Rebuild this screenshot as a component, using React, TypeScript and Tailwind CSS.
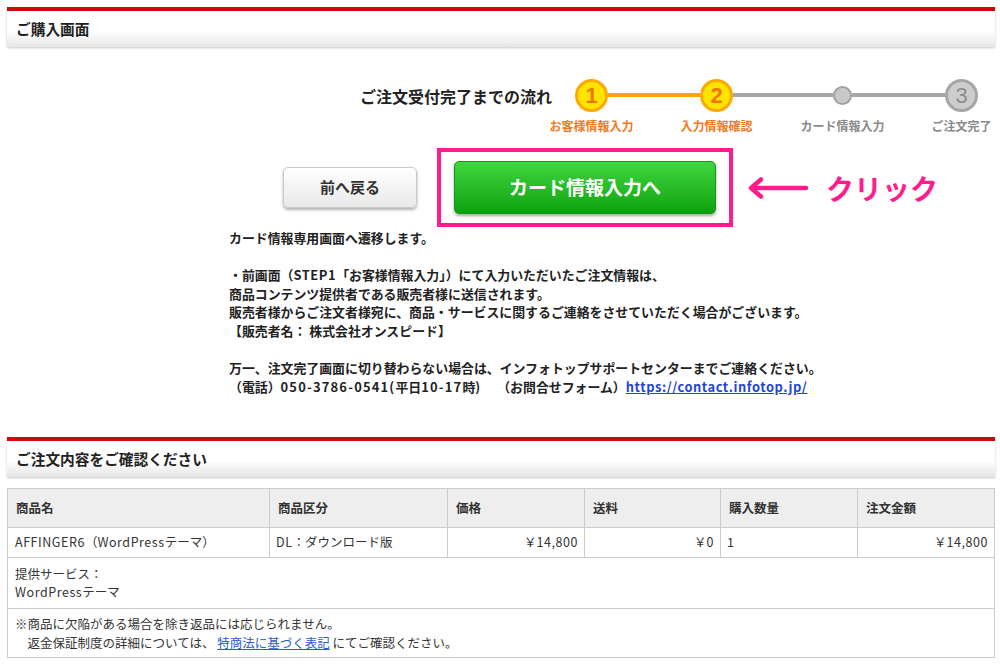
import React from 'react'

const FONT = "[font-family:'Noto_Sans_CJK_JP','Noto_Sans',sans-serif]"

function SectionHeader({ title }: { title: string }) {
  return (
    <div className="flex h-[40px] items-center border-t-4 border-[#cc0a0a] bg-linear-to-b from-white from-55% to-[#e6e6e6] pl-[9px] shadow-[0_1px_2px_rgba(0,0,0,0.22)]">
      <h2 className="text-[14.7px] leading-none font-bold text-[#222]">{title}</h2>
    </div>
  )
}

// latin runs are a bit wider in the original font
function L({ children, wide }: { children: React.ReactNode; wide?: boolean }) {
  return <span className={wide ? 'tracking-[1.2px]' : 'tracking-[0.55px]'}>{children}</span>
}

type StepProps = { num: string; label: string; active?: boolean }

function Step({ num, label, active }: StepProps) {
  return (
    <div className="flex w-[33px] flex-col items-center">
      <div
        className={
          active
            ? 'flex h-[33px] w-[33px] items-center justify-center rounded-full border-[3px] border-[#ffa800] bg-[#ffe400]'
            : 'flex h-[33px] w-[33px] items-center justify-center rounded-full border-[3px] border-[#a6a6a6] bg-[#cdcdcd]'
        }
      >
        <span
          className={
            active
              ? "[font-family:'Liberation_Sans',sans-serif] text-[22px] leading-none font-bold text-[#f07400]"
              : "[font-family:'Liberation_Sans',sans-serif] text-[22px] leading-none text-[#8c8c8c]"
          }
        >
          {num}
        </span>
      </div>
      <div
        className={
          active
            ? 'mt-[7px] text-[12px] leading-[14px] font-bold whitespace-nowrap text-[#f07a24]'
            : 'mt-[7px] text-[12px] leading-[14px] font-bold whitespace-nowrap text-[#8a8a8a]'
        }
      >
        {label}
      </div>
    </div>
  )
}

function Dot({ label }: { label: string }) {
  return (
    <div className="flex w-[19px] flex-col items-center">
      <div className="mt-[7px] h-[19px] w-[19px] rounded-full border-2 border-[#a0a0a0] bg-[#c9c9c9]" />
      <div className="mt-[14px] text-[12px] leading-[14px] font-bold whitespace-nowrap text-[#8a8a8a]">
        {label}
      </div>
    </div>
  )
}

function Stepper() {
  return (
    <div className="mt-[32px] flex items-start justify-end pr-[17px]">
      <div className="mr-[23px] flex h-[33px] items-center text-[16px] font-bold text-[#222]">
        ご注文受付完了までの流れ
      </div>
      <Step num="1" label="お客様情報入力" active />
      <div className="mt-[14px] h-[4px] w-[92px] bg-[#ffa500]" />
      <Step num="2" label="入力情報確認" active />
      <div className="mt-[14px] h-[4px] w-[100px] bg-[#a6a6a6]" />
      <Dot label="カード情報入力" />
      <div className="mt-[14px] h-[4px] w-[93px] bg-[#a6a6a6]" />
      <Step num="3" label="ご注文完了" />
    </div>
  )
}

function ArrowLeft() {
  return (
    <svg width="61" height="22" viewBox="0 0 61 22" fill="none" stroke="#ff1d8d" strokeWidth="4.5" strokeLinecap="round" strokeLinejoin="round">
      <path d="M5 11 H59" />
      <path d="M14 2.5 L4 11 L14 19.5" />
    </svg>
  )
}

const COLUMNS = [
  { label: '商品名', width: 262 },
  { label: '商品区分', width: 178 },
  { label: '価格', width: 137 },
  { label: '送料', width: 136 },
  { label: '購入数量', width: 137 },
  { label: '注文金額', width: 137 },
]

export default function App() {
  return (
    <div className={`min-h-[667px] bg-white pt-[7px] pr-[5px] pl-[7px] text-[#222] ${FONT}`}>
      <SectionHeader title="ご購入画面" />

      <Stepper />

      <div className="mt-[15px] flex items-center pl-[276px]">
        <button
          type="button"
          className="h-[41px] w-[134px] rounded-[5px] border border-[#c9c9c9] bg-linear-to-b from-white to-[#e9e9e9] text-[15px] font-bold text-[#333] shadow-[0_2px_3px_rgba(0,0,0,0.3)]"
        >
          前へ戻る
        </button>
        <div className="ml-[20px] border-4 border-[#ff1d8d] px-[13px] py-[9px]">
          <button
            type="button"
            className="h-[53px] w-[262px] rounded-[5px] border border-[#169616] bg-linear-to-b from-[#3ed63e] to-[#09a309] text-[19px] font-bold text-white shadow-[0_2px_3px_rgba(0,0,0,0.35)]"
          >
            カード情報入力へ
          </button>
        </div>
        <div className="ml-[14px]">
          <ArrowLeft />
        </div>
        <span className="ml-[18px] text-[28px] leading-none font-bold text-[#ff1d8d]">クリック</span>
      </div>

      <div className="mt-[2px] pl-[222px] text-[12.9px] leading-[18.6px] font-bold whitespace-nowrap text-[#222]">
        <p>カード情報専用画面へ遷移します。</p>
        <p>{'\u00a0'}</p>
        <p>
          ・前画面（<L>STEP1</L>「お客様情報入力」）にて入力いただいたご注文情報は、
        </p>
        <p>商品コンテンツ提供者である販売者様に送信されます。</p>
        <p>販売者様からご注文者様宛に、商品・サービスに関するご連絡をさせていただく場合がございます。</p>
        <p>【販売者名： 株式会社オンスピード】</p>
        <p>{'\u00a0'}</p>
        <p>万一、注文完了画面に切り替わらない場合は、インフォトップサポートセンターまでご連絡ください。</p>
        <p>
          （電話）<L wide>050-3786-0541(</L>平日<L wide>10-17</L>時<L wide>)</L>
          {'\u3000\u00a0'}（お問合せフォーム）
          <a href="#" className="text-[#2546d4] underline">
            <L>https://contact.infotop.jp/</L>
          </a>
        </p>
      </div>

      <div className="mt-[41px]">
        <SectionHeader title="ご注文内容をご確認ください" />
      </div>

      <table className="mt-[11px] w-[987px] table-fixed border-collapse text-[12.5px] text-[#333]">
        <colgroup>
          {COLUMNS.map((c) => (
            <col key={c.label} style={{ width: c.width }} />
          ))}
        </colgroup>
        <thead>
          <tr className="h-[39px] bg-[#eeeeee]">
            {COLUMNS.map((c) => (
              <th key={c.label} className="border border-[#cccccc] px-[8px] text-left font-bold">
                {c.label}
              </th>
            ))}
          </tr>
        </thead>
        <tbody>
          <tr className="h-[30px]">
            <td className="border border-[#cccccc] px-[7px]">
              <L>AFFINGER6</L>（<L>WordPress</L>テーマ）
            </td>
            <td className="border border-[#cccccc] px-[6px]">
              <L>DL</L>：ダウンロード版
            </td>
            <td className="border border-[#cccccc] px-[6px] text-right">
              ￥<L>14,800</L>
            </td>
            <td className="border border-[#cccccc] px-[6px] text-right">
              ￥<L>0</L>
            </td>
            <td className="border border-[#cccccc] px-[6px]">1</td>
            <td className="border border-[#cccccc] px-[6px] text-right">
              ￥<L>14,800</L>
            </td>
          </tr>
          <tr className="h-[51px]">
            <td colSpan={6} className="border border-[#cccccc] px-[7px] leading-[18px]">
              <p>提供サービス：</p>
              <p>
                <L>WordPress</L>テーマ
              </p>
            </td>
          </tr>
          <tr className="h-[49px]">
            <td colSpan={6} className="border border-[#cccccc] px-[7px] leading-[19px]">
              <p>※商品に欠陥がある場合を除き返品には応じられません。</p>
              <p>
                {'\u3000'}返金保証制度の詳細については、{' '}
                <a href="#" className="text-[#2b5ad6] underline">
                  特商法に基づく表記
                </a>{' '}
                にてご確認ください。
              </p>
            </td>
          </tr>
        </tbody>
      </table>
    </div>
  )
}
